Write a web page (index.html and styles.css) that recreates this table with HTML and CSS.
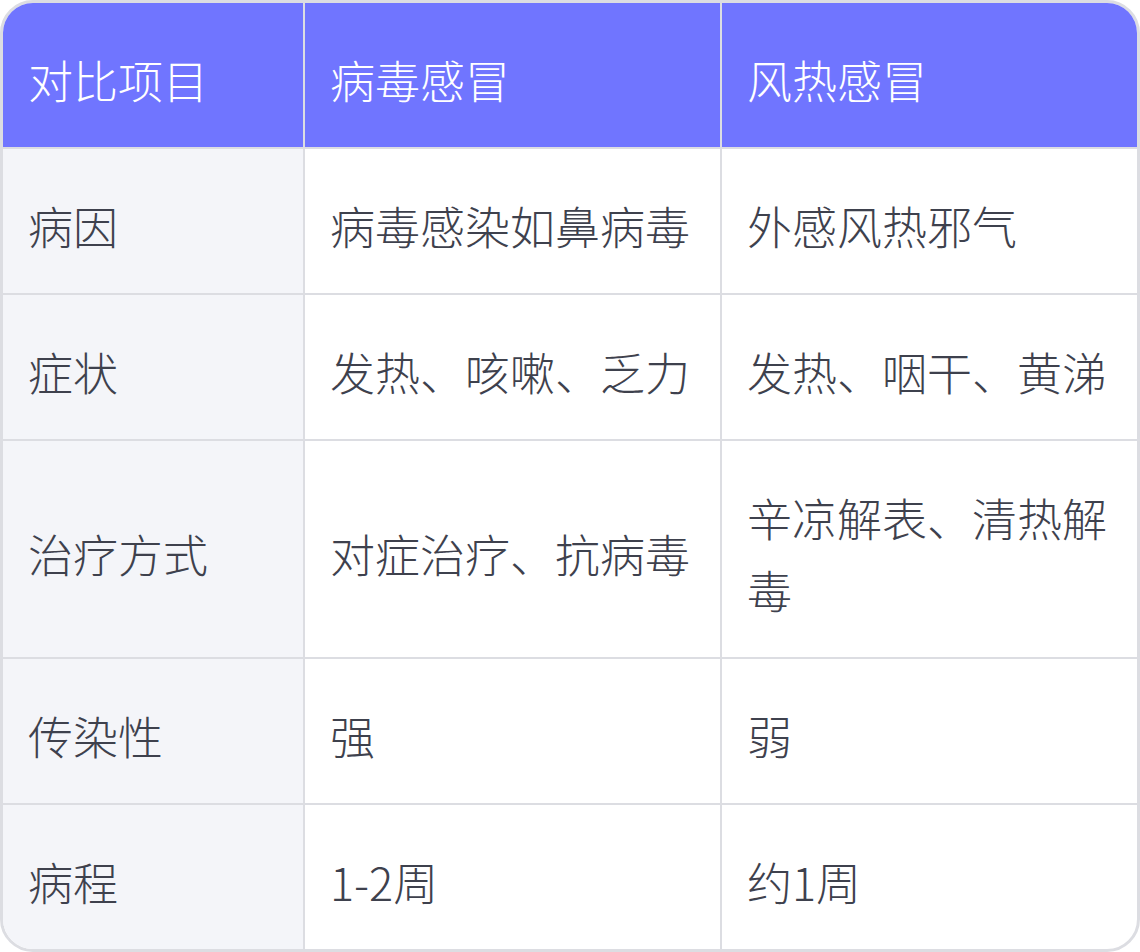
FILE: index.html
```html
<!DOCTYPE html>
<html lang="zh-CN">
<head>
<meta charset="utf-8">
<title>病毒感冒与风热感冒对比</title>
<link rel="stylesheet" href="styles.css">
</head>
<body>
<div class="card">
  <table class="cmp">
    <colgroup>
      <col class="c1">
      <col class="c2">
      <col class="c3">
    </colgroup>
    <thead>
      <tr><th>对比项目</th><th>病毒感冒</th><th>风热感冒</th></tr>
    </thead>
    <tbody>
      <tr><td>病因</td><td>病毒感染如鼻病毒</td><td>外感风热邪气</td></tr>
      <tr><td>症状</td><td>发热、咳嗽、乏力</td><td>发热、咽干、黄涕</td></tr>
      <tr><td>治疗方式</td><td>对症治疗、抗病毒</td><td>辛凉解表、清热解毒</td></tr>
      <tr><td>传染性</td><td>强</td><td>弱</td></tr>
      <tr><td>病程</td><td>1-2周</td><td>约1周</td></tr>
    </tbody>
  </table>
</div>
</body>
</html>
```

FILE: styles.css
```css
html, body {
  margin: 0;
  padding: 0;
  background: #ffffff;
}

.card {
  width: 1140px;
  box-sizing: border-box;
  border: 3px solid #dcdde2;
  border-radius: 33px;
  overflow: hidden;
  background: #ffffff;
}

.cmp {
  width: 100%;
  border-collapse: separate;
  border-spacing: 0;
  table-layout: fixed;
  font-family: "Noto Sans CJK SC", "Noto Sans", sans-serif;
  font-size: 45px;
  line-height: 72px;
  color: #3e414d;
}

.c1 { width: 302px; }
.c2 { width: 417px; }
.c3 { width: auto; }

.cmp th,
.cmp td {
  padding: 41px 26px 31px 25px;
  text-align: left;
  vertical-align: middle;
  font-weight: 300;
  border-right: 2px solid #dcdde2;
  border-bottom: 2px solid #dcdde2;
}

.cmp th {
  padding-top: 41px;
  padding-bottom: 31px;
}

.cmp th:last-child,
.cmp td:last-child {
  border-right: none;
}

.cmp tbody tr:last-child td {
  border-bottom: none;
}

.cmp th {
  background: #7075ff;
  color: #ffffff;
}

.cmp td:first-child {
  background: #f4f5f9;
}
```
